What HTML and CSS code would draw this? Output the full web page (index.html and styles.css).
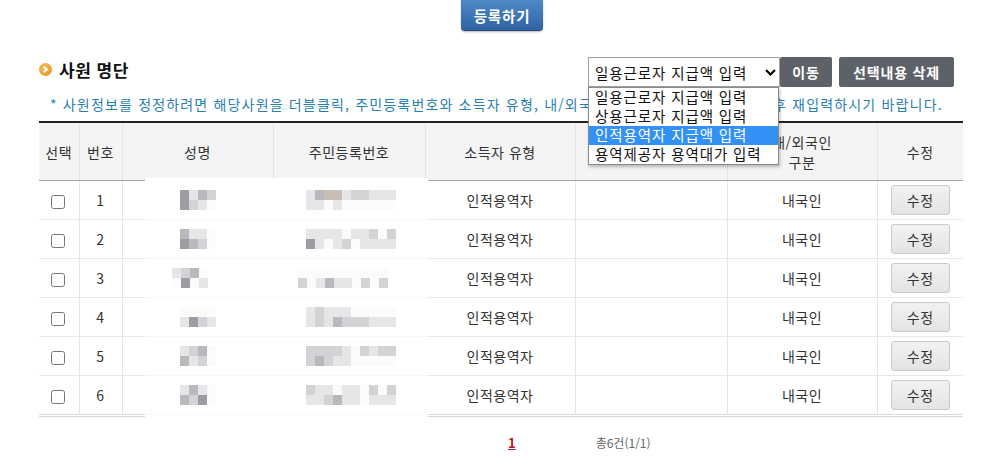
FILE: index.html
```html
<!DOCTYPE html>
<html lang="ko">
<head>
    <meta charset="UTF-8">
    <title>사원 명단</title>
    <link rel="stylesheet" href="styles.css">
</head>
<body>
<div class="container">
    <div class="top-bar">
        <button type="button" class="register-button">등록하기</button>
    </div>

    <div class="title-row">
        <h3 class="list-title"><span class="title-icon"></span>사원 명단</h3>
        <div class="actions">
            <div class="select-box">
                <div class="select-value">일용근로자 지급액 입력
                    <svg class="select-arrow" width="11" height="7" viewBox="0 0 11 7"><path d="M1 1l4.5 4.5L10 1" fill="none" stroke="#000" stroke-width="2"/></svg>
                </div>
                <ul class="select-list">
                    <li>일용근로자 지급액 입력</li>
                    <li>상용근로자 지급액 입력</li>
                    <li class="active">인적용역자 지급액 입력</li>
                    <li>용역제공자 용역대가 입력</li>
                </ul>
            </div>
            <button type="button" class="dark-button move-button">이동</button>
            <button type="button" class="dark-button delete-button">선택내용 삭제</button>
        </div>
    </div>

    <p class="notice">* 사원정보를 정정하려면 해당사원을 더블클릭, 주민등록번호와 소득자 유형, 내/외국인 구분은 변경 불가로 삭제 후 재입력하시기 바랍니다.</p>

    <div class="table-wrap">
        <table class="staff-table">
            <colgroup>
                <col style="width:40px">
                <col style="width:43px">
                <col style="width:151px">
                <col style="width:152px">
                <col style="width:150px">
                <col style="width:152px">
                <col style="width:150px">
                <col>
            </colgroup>
            <thead>
                <tr>
                    <th>선택</th>
                    <th>번호</th>
                    <th>성명</th>
                    <th>주민등록번호</th>
                    <th>소득자 유형</th>
                    <th>사업자번호</th>
                    <th>내/외국인<br>구분</th>
                    <th>수정</th>
                </tr>
            </thead>
            <tbody>
                <tr><td><input type="checkbox"></td><td class="num">1</td><td></td><td></td><td>인적용역자</td><td></td><td>내국인</td><td><button type="button" class="edit-button">수정</button></td></tr>
                <tr><td><input type="checkbox"></td><td class="num">2</td><td></td><td></td><td>인적용역자</td><td></td><td>내국인</td><td><button type="button" class="edit-button">수정</button></td></tr>
                <tr><td><input type="checkbox"></td><td class="num">3</td><td></td><td></td><td>인적용역자</td><td></td><td>내국인</td><td><button type="button" class="edit-button">수정</button></td></tr>
                <tr><td><input type="checkbox"></td><td class="num">4</td><td></td><td></td><td>인적용역자</td><td></td><td>내국인</td><td><button type="button" class="edit-button">수정</button></td></tr>
                <tr><td><input type="checkbox"></td><td class="num">5</td><td></td><td></td><td>인적용역자</td><td></td><td>내국인</td><td><button type="button" class="edit-button">수정</button></td></tr>
                <tr><td><input type="checkbox"></td><td class="num">6</td><td></td><td></td><td>인적용역자</td><td></td><td>내국인</td><td><button type="button" class="edit-button">수정</button></td></tr>
            </tbody>
        </table>

        <!-- masked personal data -->
        <div class="mask">
            <div class="mask-row">
                <div class="mos name"><i class="c4"></i><i class="c1"></i><i class="c3"></i><i class="c2"></i><i class="c4"></i><i class="c2"></i><i class="c1"></i><i class="c0"></i></div>
                <div class="mos id"><i class="c1"></i><i class="c3"></i><i class="c5"></i><i class="c5"></i><i class="c1"></i><i class="c2"></i><i class="c2"></i><i class="c1"></i><i class="c1"></i><i class="c1"></i><i class="c1"></i><i class="c1"></i><i class="c0"></i><i class="c1"></i><i class="c0"></i><i class="c0"></i><i class="c0"></i><i class="c0"></i><i class="c0"></i><i class="c0"></i></div>
            </div>
            <div class="mask-row">
                <div class="mos name"><i class="c3"></i><i class="c1"></i><i class="c1"></i><i class="c0"></i><i class="c4"></i><i class="c3"></i><i class="c2"></i><i class="c0"></i></div>
                <div class="mos id"><i class="c1"></i><i class="c1"></i><i class="c1"></i><i class="c1"></i><i class="c0"></i><i class="c1"></i><i class="c1"></i><i class="c2"></i><i class="c0"></i><i class="c2"></i><i class="c4"></i><i class="c1"></i><i class="c0"></i><i class="c1"></i><i class="c2"></i><i class="c0"></i><i class="c1"></i><i class="c1"></i><i class="c1"></i><i class="c1"></i></div>
            </div>
            <div class="mask-row">
                <div class="mos name shift"><i class="c1"></i><i class="c2"></i><i class="c3"></i><i class="c0"></i><i class="c0"></i><i class="c4"></i><i class="c0"></i><i class="c1"></i></div>
                <div class="mos id shift"><i class="c0"></i><i class="c0"></i><i class="c0"></i><i class="c0"></i><i class="c0"></i><i class="c0"></i><i class="c0"></i><i class="c0"></i><i class="c0"></i><i class="c0"></i><i class="c2"></i><i class="c0"></i><i class="c1"></i><i class="c3"></i><i class="c1"></i><i class="c1"></i><i class="c0"></i><i class="c2"></i><i class="c0"></i><i class="c2"></i></div>
            </div>
            <div class="mask-row">
                <div class="mos name"><i class="c0"></i><i class="c0"></i><i class="c0"></i><i class="c0"></i><i class="c1"></i><i class="c4"></i><i class="c2"></i><i class="c1"></i></div>
                <div class="mos id"><i class="c1"></i><i class="c2"></i><i class="c1"></i><i class="c1"></i><i class="c1"></i><i class="c0"></i><i class="c0"></i><i class="c0"></i><i class="c0"></i><i class="c0"></i><i class="c1"></i><i class="c2"></i><i class="c1"></i><i class="c3"></i><i class="c2"></i><i class="c2"></i><i class="c2"></i><i class="c1"></i><i class="c1"></i><i class="c1"></i></div>
            </div>
            <div class="mask-row">
                <div class="mos name"><i class="c1"></i><i class="c2"></i><i class="c3"></i><i class="c0"></i><i class="c3"></i><i class="c1"></i><i class="c2"></i><i class="c0"></i></div>
                <div class="mos id"><i class="c2"></i><i class="c2"></i><i class="c2"></i><i class="c2"></i><i class="c1"></i><i class="c0"></i><i class="c2"></i><i class="c1"></i><i class="c2"></i><i class="c2"></i><i class="c2"></i><i class="c3"></i><i class="c2"></i><i class="c1"></i><i class="c1"></i><i class="c0"></i><i class="c0"></i><i class="c0"></i><i class="c0"></i><i class="c0"></i></div>
            </div>
            <div class="mask-row">
                <div class="mos name"><i class="c1"></i><i class="c3"></i><i class="c1"></i><i class="c0"></i><i class="c3"></i><i class="c2"></i><i class="c4"></i><i class="c0"></i></div>
                <div class="mos id"><i class="c2"></i><i class="c1"></i><i class="c1"></i><i class="c0"></i><i class="c1"></i><i class="c1"></i><i class="c0"></i><i class="c2"></i><i class="c0"></i><i class="c2"></i><i class="c1"></i><i class="c1"></i><i class="c2"></i><i class="c3"></i><i class="c1"></i><i class="c1"></i><i class="c0"></i><i class="c1"></i><i class="c1"></i><i class="c1"></i></div>
            </div>
        </div>
    </div>

    <div class="paging">
        <a href="#" class="page-num">1</a>
        <span class="total">총6건(1/1)</span>
    </div>
</div>
</body>
</html>
```

FILE: styles.css
```css
body {
    margin: 0;
    font-family: "Noto Sans CJK KR", "Noto Sans", sans-serif;
    font-size: 14px;
    color: #333;
    background-color: #fff;
}
.container {
    width: 924px;
    padding-left: 39px;
}
.top-bar {
    height: 57px;
    text-align: center;
}
.register-button {
    width: 82px;
    height: 31px;
    padding: 0;
    margin-left: 2px;
    border: none;
    border-bottom: 1px solid #1f4a80;
    border-radius: 0 0 4px 4px;
    background: linear-gradient(#5089c9, #2f62a3);
    box-shadow: 0 1px 2px rgba(0, 0, 0, 0.3);
    color: #fff;
    font-family: inherit;
    font-size: 14.5px;
    font-weight: bold;
    letter-spacing: 0.8px;
}
.title-row {
    display: flex;
    justify-content: space-between;
    align-items: center;
    height: 30px;
    padding-right: 9px;
}
.list-title {
    display: flex;
    align-items: center;
    margin: 0 0 5px 0;
    font-size: 17px;
    font-weight: bold;
    color: #111;
    letter-spacing: 0.5px;
}
.title-icon {
    position: relative;
    width: 13px;
    height: 13px;
    margin-right: 7px;
    border-radius: 50%;
    background: radial-gradient(circle at 40% 35%, #f8c060, #e88a10);
}
.title-icon::after {
    content: "";
    position: absolute;
    left: 3px;
    top: 4px;
    width: 3px;
    height: 3px;
    border-top: 2px solid #fff;
    border-right: 2px solid #fff;
    transform: rotate(45deg);
}
.actions {
    display: flex;
    align-items: center;
}
.select-box {
    position: relative;
}
.select-value {
    display: flex;
    align-items: center;
    justify-content: space-between;
    box-sizing: border-box;
    width: 192px;
    height: 30px;
    padding: 0 3px 0 6px;
    border: 1px solid #a0a0a0;
    background-color: #fff;
    font-size: 14.5px;
    color: #111;
    letter-spacing: 0.9px;
}
.select-arrow {
    margin-top: 1px;
}
.select-list {
    position: absolute;
    left: 0;
    top: 30px;
    z-index: 5;
    box-sizing: border-box;
    width: 191px;
    margin: 0;
    padding: 0;
    list-style: none;
    border: 1px solid #8a8a8a;
    background-color: #fff;
    box-shadow: 1px 2px 3px rgba(0, 0, 0, 0.25);
}
.select-list li {
    height: 19px;
    line-height: 18px;
    padding-left: 6px;
    font-size: 14.5px;
    color: #111;
    letter-spacing: 0.9px;
    white-space: nowrap;
}
.select-list li.active {
    background-color: #3390f4;
    color: #fff;
}
.dark-button {
    height: 30px;
    padding: 0;
    border: none;
    border-radius: 2px;
    background-color: #5d6269;
    color: #fff;
    font-family: inherit;
    font-size: 14px;
    font-weight: bold;
    letter-spacing: 0.8px;
}
.move-button {
    width: 52px;
    margin: 0 7px 0 0;
}
.delete-button {
    width: 115px;
}
.notice {
    margin: 7px 0 0 11px;
    height: 27px;
    font-size: 14px;
    color: #2a7fb0;
    letter-spacing: 1.17px;
    white-space: nowrap;
}
.table-wrap {
    position: relative;
}
.staff-table {
    width: 924px;
    border-collapse: collapse;
    table-layout: fixed;
    border-top: 2px solid #222;
    border-bottom: 3px double #d8d8d8;
}
.staff-table th {
    height: 57px;
    padding: 0;
    background-color: #f4f4f4;
    border-left: 1px solid #e4e4e4;
    border-bottom: 1px solid #a8a8a8;
    font-weight: normal;
    font-size: 14px;
    color: #333;
    line-height: 20px;
    letter-spacing: 0.5px;
}
.staff-table td {
    height: 38px;
    padding: 0;
    border-left: 1px solid #e4e4e4;
    border-bottom: 1px solid #e8e8e8;
    text-align: center;
    font-size: 14px;
    color: #333;
    letter-spacing: 0.5px;
}
.staff-table th:first-child, .staff-table td:first-child {
    border-left: none;
}
.staff-table tr:last-child td {
    border-bottom: none;
}
.staff-table input[type="checkbox"] {
    width: 14px;
    height: 14px;
    margin: 0 0 0 -1px;
    vertical-align: middle;
}
.num {
    color: #555;
}
.edit-button {
    width: 59px;
    height: 30px;
    border: 1px solid #cacaca;
    border-radius: 3px;
    background: linear-gradient(#f2f2f2, #e4e4e4);
    font-family: inherit;
    font-size: 14px;
    color: #333;
    letter-spacing: 0.5px;
}
.mask {
    position: absolute;
    left: 106px;
    top: 57px;
    width: 283px;
    height: 240px;
    padding-top: 3px;
    box-sizing: border-box;
    background-color: #fff;
}
.mask-row {
    display: flex;
    align-items: center;
    height: 38px;
    border-bottom: 1px solid #f7f7f7;
}
.mos {
    display: grid;
    grid-auto-rows: 10px;
}
.mos.name {
    grid-template-columns: repeat(4, 9px);
    margin-left: 35px;
}
.mos.id {
    grid-template-columns: repeat(10, 9px);
    margin-left: 90px;
}
.mos.name.shift {
    margin-left: 27px;
}
.mos.id.shift {
    margin-left: 90px;
}
.mos i {
    display: block;
}
.c0 { background-color: #fbfbfa; }
.c1 { background-color: #e6e6e8; }
.c2 { background-color: #d3d3d6; }
.c3 { background-color: #b9b9bd; }
.c4 { background-color: #9c9ca2; }
.c5 { background-color: #c7bfb6; }
.paging {
    display: flex;
    align-items: center;
    height: 50px;
    padding-left: 469px;
}
.page-num {
    color: #c0141b;
    font-weight: bold;
    font-size: 13px;
}
.total {
    margin-left: 80px;
    font-size: 12px;
    color: #666;
}
```
